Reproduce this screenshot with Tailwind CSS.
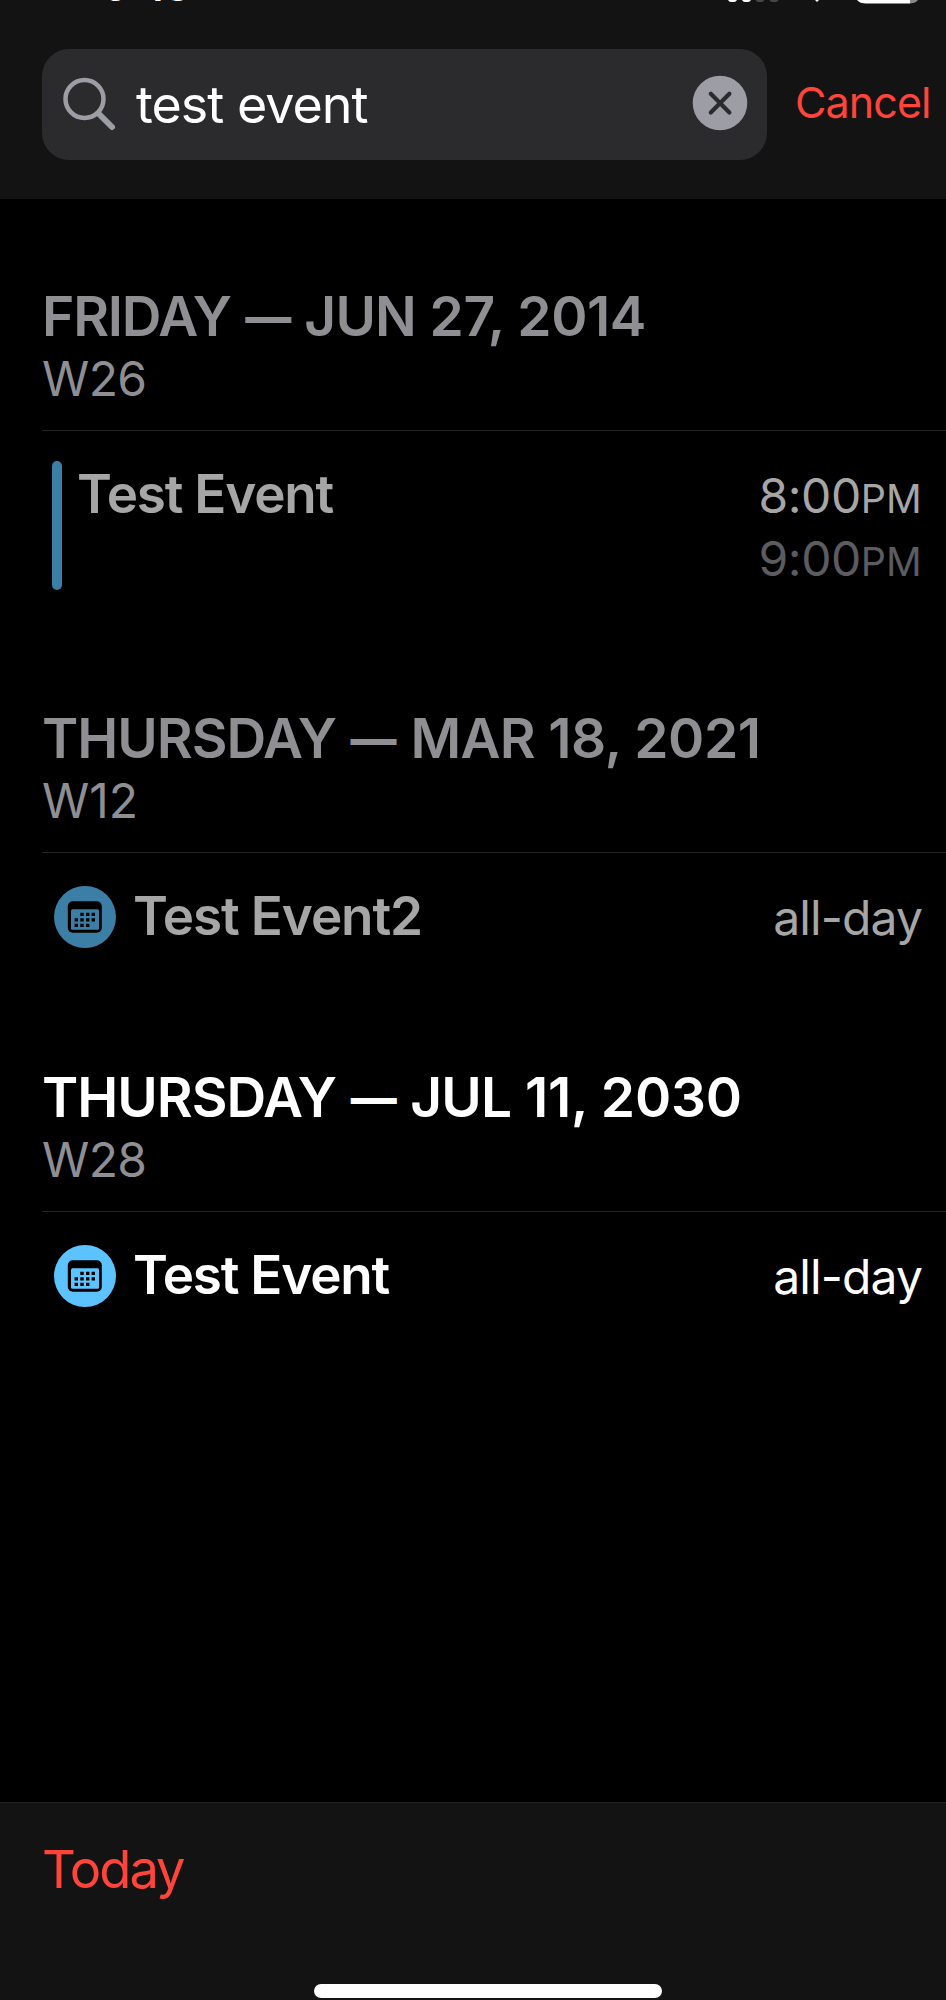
<!DOCTYPE html>
<html lang="en">

<head>
	<meta charset="UTF-8">
	<meta name="viewport" content="width=device-width, initial-scale=1.0">
	<title>Calendar Search</title>
	<script src="https://cdn.jsdelivr.net/npm/@tailwindcss/browser@4"></script>
</head>

<body class="bg-black font-['Inter',sans-serif] text-white">
	<div class="flex flex-col w-[946px] h-[2000px] overflow-hidden whitespace-nowrap">

		<!-- Header: status bar and search field -->
		<header class="h-[199px] shrink-0 bg-[#131313]">
			<div class="flex justify-between items-start h-[49px] pl-[103px] pr-[28px]">
				<span class="-mt-[40px] text-[42px] leading-none font-semibold tracking-[-2.4px]">9<span class="align-[5px] leading-none">:</span>48</span>
				<svg class="w-[192px] h-[6px]" viewBox="726 0 192 6">
					<path d="M728 0h9q-1 2-3 2h-3q-2 0-3-2zM742 0h9q-1 2-3 2h-3q-2 0-3-2z" fill="#fff" />
					<path d="M755.500 0h9q-1 2-3 2h-3q-2 0-3-2zM769.500 0h9q-1 2-3 2h-3q-2 0-3-2z" fill="#48484a" />
					<path d="M815 0h4l-2 2z" fill="#fff" />
					<path d="M857 0q3 3.500 9 3.500h44V0z" fill="#fff" />
					<path d="M910 0v3.500q6-.5 8-3.500z" fill="#8a8a8a" />
				</svg>
			</div>

			<div class="flex items-center pl-[42px]">
				<div class="flex items-center w-[725px] h-[111px] rounded-[27px] bg-[#2b2b2d] pl-[20px] pr-[19px]">
					<svg class="w-[56px] h-[56px] shrink-0" viewBox="0 0 56 56" fill="none" stroke="#9d9da5" stroke-linecap="round">
						<circle cx="22.500" cy="22" r="19" stroke-width="4.500" />
						<path d="M36.500 36.500L50 50" stroke-width="6" />
					</svg>
					<span class="ml-[18px] text-[52px] leading-[64px] tracking-[-1px]">test event</span>
					<svg class="w-[56px] h-[56px] shrink-0 ml-auto -mt-[4px]" viewBox="0 0 56 56">
						<circle cx="28" cy="28" r="27.300" fill="#9d9da5" />
						<path d="M18.800 18.800l18.600 18.600M37.400 18.800L18.800 37.400" stroke="#2b2b2d" stroke-width="4.200" stroke-linecap="round" />
					</svg>
				</div>
				<span class="ml-[28px] -mt-[6px] text-[43px] leading-[52px] tracking-[-0.9px] text-[#ff453a]">Cancel</span>
			</div>
		</header>

		<!-- Search results -->
		<main class="grow pt-[84px] pl-[42px]">

			<section class="h-[422px]">
				<h2 class="text-[55px] leading-[66px] font-semibold tracking-[-0.4px] text-[#8e8e93]"><span class="tracking-[-1.2px]">FRIDAY</span> <span class="ml-[1px] text-[46px] leading-none font-extrabold align-[2px]">—</span> <span class="tracking-[-0.8px]">JUN</span> 27, 2014</h2>
				<p class="pb-[21px] border-b border-[#232324] text-[48px] leading-[60px] tracking-[-0.6px] text-[#8e8e93]">W26</p>
				<div class="flex items-start pt-[30px] pl-[10px] pr-[24px]">
					<div class="w-[10px] h-[129px] rounded-full bg-[#3c7fa6]"></div>
					<span class="ml-[15px] mt-[1px] text-[53px] leading-[64px] font-semibold tracking-[-1.2px] text-[#a6a6a6]">Test Event</span>
					<div class="flex flex-col ml-auto mt-[3px] text-right text-[48px] leading-[63px] tracking-[-0.5px]">
						<span class="text-[#a6a6a6]">8:00<span class="text-[39.5px] leading-none tracking-[0.2px]">PM</span></span>
						<span class="text-[#5c5c60]">9:00<span class="text-[39.5px] leading-none tracking-[0.2px]">PM</span></span>
					</div>
				</div>
			</section>

			<section class="h-[359px]">
				<h2 class="text-[55px] leading-[66px] font-semibold tracking-[-0.4px] text-[#8e8e93]"><span class="tracking-[-1px]">THURSDAY</span> <span class="ml-[1px] mr-[1px] text-[46px] leading-none font-extrabold align-[2px]">—</span> <span class="tracking-[-0.8px]">MAR</span> 18, 2021</h2>
				<p class="pb-[21px] border-b border-[#232324] text-[48px] leading-[60px] text-[#8e8e93]">W12</p>
				<div class="flex items-start pt-[32px] pl-[12px] pr-[24px]">
					<svg class="w-[62px] h-[62px] mt-[1px]" viewBox="0 0 62 62">
						<circle cx="31" cy="31" r="31" fill="#3c7fa6" />
						<rect x="13.800" y="15.300" width="34" height="31.500" rx="5" />
						<rect x="17" y="23.300" width="28" height="20.500" rx="1.500" fill="#3c7fa6" />
						<path d="M28 26.700v3.200M33.700 26.700v3.200M39.300 26.700v3.200M22.300 32.200v3.200M28 32.200v3.200M33.700 32.200v3.200M39.300 32.200v3.200M22.300 37.700v3.200M28 37.700v3.200M33.700 37.700v3.200" stroke="#000" stroke-width="3.400" />
					</svg>
					<span class="ml-[17px] -mt-[1px] text-[53px] leading-[64px] font-semibold tracking-[-1.1px] text-[#a6a6a6]">Test Event2</span>
					<span class="ml-auto mt-[1px] text-[48px] leading-[63px] tracking-[-0.87px] text-[#a6a6a6]">all-day</span>
				</div>
			</section>

			<section>
				<h2 class="text-[55px] leading-[66px] font-semibold tracking-[-0.2px]"><span class="tracking-[-1px]">THURSDAY</span> <span class="ml-[1px] text-[46px] leading-none font-extrabold align-[2px]">—</span> <span class="tracking-[-0.8px]">JUL</span> 11, 2030</h2>
				<p class="pb-[21px] border-b border-[#232324] text-[48px] leading-[60px] tracking-[-0.6px] text-[#8e8e93]">W28</p>
				<div class="flex items-start pt-[32px] pl-[12px] pr-[24px]">
					<svg class="w-[62px] h-[62px] mt-[1px]" viewBox="0 0 62 62">
						<circle cx="31" cy="31" r="31" fill="#5cc3ff" />
						<rect x="13.800" y="15.300" width="34" height="31.500" rx="5" />
						<rect x="17" y="23.300" width="28" height="20.500" rx="1.500" fill="#5cc3ff" />
						<path d="M28 26.700v3.200M33.700 26.700v3.200M39.300 26.700v3.200M22.300 32.200v3.200M28 32.200v3.200M33.700 32.200v3.200M39.300 32.200v3.200M22.300 37.700v3.200M28 37.700v3.200M33.700 37.700v3.200" stroke="#000" stroke-width="3.400" />
					</svg>
					<span class="ml-[17px] -mt-[1px] text-[53px] leading-[64px] font-semibold tracking-[-1.2px]">Test Event</span>
					<span class="ml-auto mt-[1px] text-[48px] leading-[63px] tracking-[-0.87px]">all-day</span>
				</div>
			</section>
		</main>

		<!-- Toolbar with home indicator -->
		<footer class="flex flex-col justify-between h-[198px] shrink-0 border-t border-[#232324] bg-[#131313] pt-[34px] pb-[2px]">
			<span class="pl-[42px] text-[52.5px] leading-[64px] tracking-[-2px] text-[#ff453a]">Today</span>
			<div class="ml-[314px] w-[348px] h-[14px] rounded-full bg-white"></div>
		</footer>
	</div>
</body>

</html>
